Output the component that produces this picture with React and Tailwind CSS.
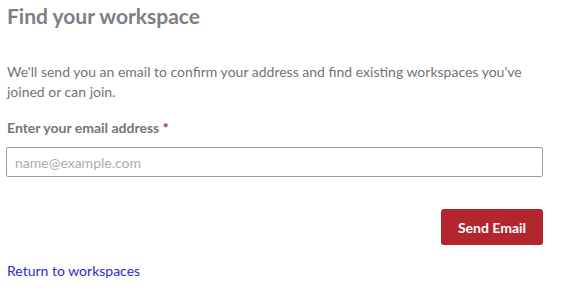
export default function App() {
  return (
    <div className="w-[562px] h-[293px] bg-white font-['Lato','Liberation_Sans',sans-serif] pl-[6px] pr-[19px] pt-[1px]">
      <h1 className="text-[21px] leading-[29px] font-bold text-[#7b8087] pl-px">Find your workspace</h1>

      <p className="mt-[32px] text-[14px] leading-[20px] text-[#6f7479] pl-px pr-4">
        We'll send you an email to confirm your address and find existing workspaces you've joined or can join.
      </p>

      <label className="block mt-[16px] text-[14px] leading-[20px] font-bold text-[#72777d] pl-px">
        Enter your email address <span className="text-[#b3262d]">*</span>
      </label>

      <input
        className="mt-[9px] w-full h-[30px] border border-[#9aa0a6] rounded-[2px] px-[8px] text-[14px] text-[#333] placeholder:text-[#a9adb1] outline-none"
        placeholder="name@example.com"
      />

      <div className="flex justify-end mt-[32px]">
        <button className="w-[102px] h-[36px] bg-[#b3262d] text-white text-[14px] font-bold rounded-[3px]">
          Send Email
        </button>
      </div>

      <a href="#" className="block mt-[16px] text-[14px] leading-[20px] text-[#2b2bd0] pl-px">
        Return to workspaces
      </a>
    </div>
  );
}
